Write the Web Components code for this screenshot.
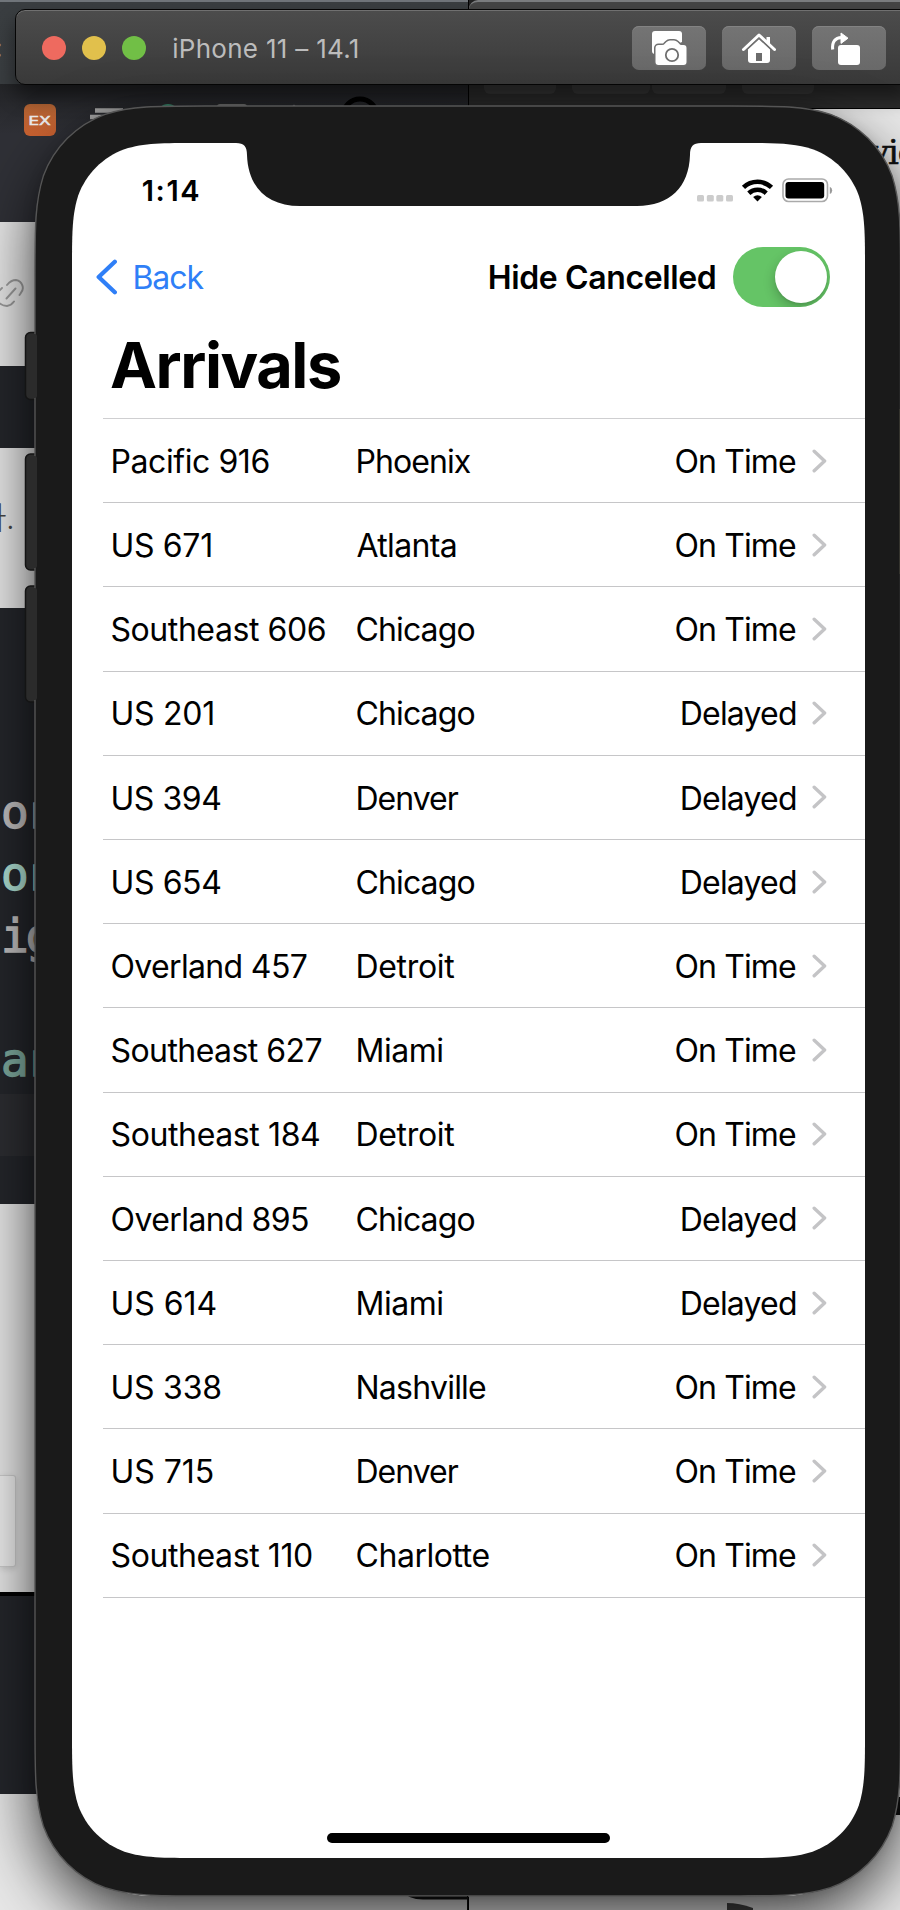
<!DOCTYPE html>
<html lang="en">
<head>
<meta charset="utf-8">
<title>iPhone 11 – 14.1</title>
<style>
html,body{margin:0;padding:0;width:900px;height:1910px;overflow:hidden;background:#222}
body{font-family:Inter,"Liberation Sans",sans-serif}
</style>
</head>
<body>
<sim-desktop>
  <desk-left slot="back"></desk-left>
  <desk-right slot="back"></desk-right>
  <sim-titlebar>iPhone 11 – 14.1</sim-titlebar>
  <sim-phone>
    <ios-status></ios-status>
    <ios-nav></ios-nav>
    <ios-title></ios-title>
    <flight-list></flight-list>
    <home-bar></home-bar>
  </sim-phone>
</sim-desktop>
<script>
const define = (name, html, init) => customElements.define(name, class extends HTMLElement {
  connectedCallback() {
    if (this.shadowRoot) return;
    this.attachShadow({ mode: 'open' }).innerHTML = html;
    if (init) init.call(this, this.shadowRoot);
  }
});

/* Text whose inked width is set by tracking: <fit-text ink="120" size="32" weight="400"> */
const ctx = document.createElement('canvas').getContext('2d');
customElements.define('fit-text', class extends HTMLElement {
  connectedCallback() {
    if (this.shadowRoot) return;
    const text = this.getAttribute('text'), ink = +this.getAttribute('ink');
    const size = +this.getAttribute('size') || 32, weight = this.getAttribute('weight') || 400;
    ctx.font = `${weight} ${size}px Inter, "Liberation Sans", sans-serif`;
    ctx.letterSpacing = '0.01px';
    const m = ctx.measureText(text);
    const natural = m.actualBoundingBoxLeft + m.actualBoundingBoxRight;
    const gap = (ink - natural) / (text.length - 1);
    this.attachShadow({ mode: 'open' }).innerHTML = `<style>
      :host{display:block;width:${ink}px;white-space:nowrap;flex:none}
      span{display:block;width:max-content;font:${weight} ${size}px/${this.getAttribute('line') || size * 1.3 + 'px'} Inter,"Liberation Sans",sans-serif;
        letter-spacing:${gap.toFixed(3)}px;margin-left:${m.actualBoundingBoxLeft.toFixed(2)}px;font-variant-ligatures:none}
    </style><span></span>`;
    this.shadowRoot.querySelector('span').textContent = text;
  }
});

define('sim-desktop', `<style>
  :host{display:grid;grid-template:1910px / 468px 432px;overflow:hidden}
  .front{grid-area:1/1/2/3;display:flex;flex-direction:column;z-index:1}
</style><slot name="back"></slot><div class="front"><slot></slot></div>`);

define('desk-left', `<style>
  :host{display:flex;flex-direction:column;grid-area:1/1;overflow:hidden}
  div{flex:none;overflow:hidden;white-space:nowrap}
  .top{height:82px;background:linear-gradient(#3a3e41,#393d40);border-top:2px solid #70757a;color:#aaa;font:26px/92px Inter,sans-serif}
  .top span{margin-left:-5px}
  .tabs{height:138px;background:linear-gradient(#232427,#2f3036 50px);display:flex}
  .ex{width:32px;height:32px;margin:20px 0 0 24px;border-radius:6px;background:linear-gradient(#b26434,#ca6130);display:grid;place-items:center;color:#ececec;font:13px/1 "DejaVu Sans",sans-serif}
  .ex span{transform:scaleX(1.32);-webkit-text-stroke:.5px #ececec}
  .d{background:#24262b}.l{background:#e6e6e6}
  .code{font:46px/62px "DejaVu Sans Mono",monospace;color:#c1bfbf}
  .code p{margin:0 0 0 1px;height:62px;-webkit-text-stroke:1.300px;letter-spacing:-3px}
  .g{color:#aedfd2}
  .band{height:62px;background:#2c2d31}
  .card{width:15px;height:90px;margin-top:271px;border:1px solid #cbcbcb;border-left:0;border-radius:0 3px 3px 0;background:#ececec;box-shadow:0 2px 6px #0002}
  svg{display:block}
</style>
<div class="top"><span>:</span></div>
<div class="tabs"><div class="ex"><span>EX</span></div>
 <svg width="400" height="40" viewBox="56 84 400 40" fill="none"><path d="M95 110.500h28M90 117h30" stroke="#aaa" stroke-width="4.500"/><circle cx="168" cy="115" r="11" fill="#3a9072"/><rect x="217" y="104" width="30" height="10" rx="3" fill="#777"/><path d="M290 110l4-4 4 4" stroke="#888" stroke-width="2"/><circle cx="360" cy="116" r="17" stroke="#000" stroke-width="5"/></svg></div>
<div class="l" style="height:144px"><svg style="margin-top:56px" width="30" height="30" viewBox="0 278 30 30" fill="none" stroke="#9a9a9a" stroke-width="1.900" stroke-linecap="round"><path d="M6.500 298.500l9-10M7 285q4-5 9-5a8 8 0 0 1 4.500 13.500l-1 1.500M-2 292l4-4M-2 302q4 4 9 4 4-.5 7-4.500"/></svg></div>
<div class="d" style="height:82px"></div>
<div class="l" style="height:160px;color:#444"><span style="display:block;margin:45px 0 0 -22px;font:300 31px/46px 'Noto Sans CJK KR',sans-serif">다.</span></div>
<div class="d code" style="height:486px"><p style="margin-top:173px">or</p><p class="g">or</p><p>ig</p><p></p><p class="g" style="color:#7da99d">ar</p></div>
<div class="band"></div>
<div class="d" style="height:48px"></div>
<div class="l" style="height:388px"><div class="card"></div></div>
<div style="height:4px;background:#000"></div>
<div class="d" style="height:198px"></div>
<div class="l" style="height:116px"></div>`);

define('desk-right', `<style>
  :host{display:flex;flex-direction:column;grid-area:1/2;overflow:hidden;background:linear-gradient(#222 60px,#e6e6e6 60px);border-left:1px solid #000;box-sizing:border-box}
  div{flex:none}
  .top{height:83px;background:#454545;border-top:2px solid #7b7d7f;border-radius:9px 0 0 0}
  .bar{height:23px;border-bottom:1px solid #000;background:#2c2c2c;display:flex}
  .bar i{height:9px;background:#383838;border-radius:0 0 6px 6px}
  .txt{font:500 34px/40px "DejaVu Serif",serif;color:#111;margin:23px 0 0 401px;white-space:nowrap;letter-spacing:-1.200px;-webkit-text-stroke:.6px #111}
  .dark{height:18px;background:#111;margin-top:1625px}
</style><div class="top"></div><div class="bar"><i style="width:72px;margin-left:15px"></i><i style="width:78px;margin-left:16px"></i><i style="width:74px;margin-left:2px"></i><i style="width:72px;margin-left:16px"></i></div>
<div class="txt">vie</div><div class="dark"></div>
<svg width="60" height="12" style="margin:88px 0 0 258px;flex:none"><path d="M0 0q12 0 26 5v7H0z" fill="#444"/></svg>`);

define('sim-titlebar', `<style>
  :host{display:flex;align-items:center;height:74px;margin:9px -12px 0 15px;border:1px solid #050505;border-radius:10px;flex:none;box-sizing:content-box;
    background:linear-gradient(#4c4c4c,#393939);box-shadow:inset 0 1px #707070,0 12px 20px #0007;padding-left:26px;color:#bcbcbc}
  i{width:24px;height:24px;border-radius:50%;margin:2px 16px 0 0;flex:none}
  fit-text{margin:3px 0 0 11.200px}
  nav{display:flex;gap:16px;margin:2px 0 0 274.600px}
  b{width:74px;height:44px;border-radius:7px;background:linear-gradient(#747474,#696969);box-shadow:inset 0 1px #838383}
  svg{display:block}
</style><i style="background:#ee6a5f"></i><i style="background:#e1c04c"></i><i style="background:#71bf46"></i>
<fit-text ink="184.700" size="26" text="iPhone 11 – 14.1"></fit-text>
<nav><b><svg width="74" height="44" viewBox="632 26 74 44"><path d="M655 31h24a3 3 0 0 1 3 3v8l-27 12a3 3 0 0 1-3-3V34a3 3 0 0 1 3-3z" fill="#fff"/><path d="M660 45h3.500q2 0 3-1.500l1.500-1.500q1.500-1.500 3.500-1.500h4q2 0 3.500 1.500l1.500 1.500q1 1.500 2.500 1.500h2a3 3 0 0 1 3 3v14a3 3 0 0 1-3 3h-25a3 3 0 0 1-3-3V48a3 3 0 0 1 3-3z" transform="translate(-1.500 0)" fill="#fff" stroke="#6f6f6f" stroke-width="3" paint-order="stroke"/><circle cx="672" cy="55" r="6.200" fill="none" stroke="#6f6f6f" stroke-width="1.800"/></svg></b>
<b><svg width="74" height="44" viewBox="722 26 74 44"><path d="M759 38.500L748 49v11a3 3 0 0 0 3 3h16a3 3 0 0 0 3-3V49z" fill="#fff"/><path d="M743.500 49.500L759 35l15.500 14.500" fill="none" stroke="#fff" stroke-width="3" stroke-linejoin="round" stroke-linecap="round"/><path d="M766.500 37h3.500v8l-3.500-3z" fill="#fff"/><path d="M747 49.500l12-11 12 11" fill="none" stroke="#6f6f6f" stroke-width="1.200"/><path d="M756 53h6v8h-6z" fill="#6c6c6c"/></svg></b>
<b><svg width="74" height="44" viewBox="812 26 74 44"><rect x="838" y="45" width="22" height="20" rx="3" fill="#fff"/><path d="M832.700 49.500q-1.200-11.500 9-12" fill="none" stroke="#fff" stroke-width="3"/><path d="M841 33l7 5.200-7 5.200z" fill="#fff" stroke="#fff" stroke-linejoin="round"/></svg></b></nav>`);

/* Rounded rectangle with continuous (squircle) corners */
function squircle(x0, y0, x1, y1, r) {
  const k = [1.52866, 1.08849, .86841, .63149, .07491, .37282, .16906].map(v => v * r);
  const corner = (p) => `C${p(k[1],0)} ${p(k[2],0)} ${p(k[3],k[4])}C${p(k[5],k[6])} ${p(k[6],k[5])} ${p(k[4],k[3])}C${p(0,k[2])} ${p(0,k[1])} ${p(0,k[0])}`;
  const rev = (p) => `C${p(0,k[1])} ${p(0,k[2])} ${p(k[4],k[3])}C${p(k[6],k[5])} ${p(k[5],k[6])} ${p(k[3],k[4])}C${p(k[2],0)} ${p(k[1],0)} ${p(k[0],0)}`;
  const tr = (a,b) => `${x1-a},${y0+b}`, br = (a,b) => `${x1-a},${y1-b}`, bl = (a,b) => `${x0+a},${y1-b}`, tl = (a,b) => `${x0+a},${y0+b}`;
  return `M${tl(k[0],0)}L${tr(k[0],0)}${corner(tr)}L${br(0,k[0])}${rev(br)}L${bl(k[0],0)}${corner(bl)}L${tl(0,k[0])}${rev(tl)}Z`;
}
define('sim-phone', `<style>
  :host{display:block;flex:none;position:relative;width:865px;height:1790px;margin:21px 0 0 35px;border-radius:118px;box-shadow:0 24px 58px 4px rgba(0,0,0,.66),0 0 14px rgba(0,0,0,.16)}
  .shell{position:absolute;left:-35px;top:-106px;display:block}
  .screen{position:relative;display:flex;flex-direction:column;box-sizing:border-box;width:793px;height:1715px;margin-left:37px;padding-top:27px;top:37px}
</style>
<svg class="shell" width="900" height="1910" viewBox="0 0 900 1910">
 <g fill="#2b2b2b" stroke="#141414" stroke-width="1.500"><rect x="25.500" y="332.500" width="18" height="67" rx="5"/><rect x="25.500" y="454" width="18" height="116" rx="5"/><rect x="25.500" y="586" width="18" height="116" rx="5"/></g>
 <path d="${squircle(35, 106, 900.5, 1896, 111)}" fill="#1a1a1a" stroke="#555" stroke-width="1.400"/>
 <g fill="#2b2b2b"><rect x="28" y="334" width="9" height="64" rx="2"/><rect x="28" y="456" width="9" height="112" rx="2"/><rect x="28" y="588" width="9" height="112" rx="2"/></g>
 <path d="M899.500 409v165" stroke="#35342e"/>
 <path d="M408 1896.500h59v3h-44q-8 0-15-3zM467 1896h1v14h-1z" fill="#080808"/>
 <path d="${squircle(72, 143, 865, 1858, 83)}" fill="#fff"/>
 <path d="M236 142v1C244 143 247 146.500 247 155C248 187 267 206 300 206H637C670 206 689 187 690 155C690 146.500 693 143 701 143v-1z" fill="#1a1a1a"/>
</svg>
<div class="screen"><slot></slot></div>`);

define('ios-status', `<style>
  :host{display:flex;align-items:center;height:41px;flex:none;color:#000}
  fit-text{margin:0 498.700px 0 70.700px}svg{display:block;flex:none}
</style><fit-text ink="55.600" size="29" weight="600" text="1:14"></fit-text>
<svg width="137" height="41" viewBox="697 170 137 41"><g fill="#ccc"><rect x="697" y="195" width="7" height="6.500" rx="1.500"/><rect x="706.800" y="195" width="7" height="6.500" rx="1.500"/><rect x="716.300" y="195" width="7" height="6.500" rx="1.500"/><rect x="726" y="195" width="7" height="6.500" rx="1.500"/></g>
<g fill="none" stroke="#000" stroke-width="4.600"><path d="M743.500 187.400a20.300 20.300 0 0 1 28 0"/><path d="M748.800 193.200a12.700 12.700 0 0 1 17.400 0"/></g><path d="M757.500 201.500l-4.400-4.500q4.400-3.400 8.800 0z"/>
<rect x="783" y="179" width="44.500" height="22.500" rx="5.500" fill="none" stroke="#aaa" stroke-width="1.600"/><rect x="785.500" y="182" width="38.700" height="16.500" rx="3" fill="#000"/><path d="M829.800 186.700q2.400 1.400 2.400 3.700t-2.400 3.700z" fill="#999"/></svg>`);

define('ios-nav', `<style>
  :host{display:flex;align-items:center;height:132px;flex:none}
  svg{display:block;margin-left:24px;flex:none}
  .back{color:#2f7ff7;margin-left:17.500px}.label{margin-left:285.200px;color:#000}
  fit-text{padding-top:1px}
  .toggle{width:97.500px;height:60px;border-radius:30px;background:#65c466;margin-left:18px;box-sizing:border-box;padding:4px 3px 4px 4px;display:flex;justify-content:flex-end;overflow:hidden}
  .toggle i{width:52px;height:52px;border-radius:50%;background:#fff;box-shadow:-1px 5px 12px #0003,0 2px 2px #0001}
</style><svg width="21" height="36" viewBox="0 0 21 36" fill="none" stroke="#2f7ff7" stroke-width="4.300" stroke-linecap="round" stroke-linejoin="round"><path d="M18.800 2.700L2.700 18l16.100 15.300"/></svg>
<fit-text class="back" ink="70" text="Back"></fit-text><fit-text class="label" ink="225.300" weight="600" text="Hide Cancelled"></fit-text><div class="toggle"><i></i></div>`);

define('ios-title', `<style>:host{display:flex;align-items:center;height:44px;flex:none;padding-left:39px;color:#000}fit-text{padding-top:1px}</style>
<fit-text ink="229" size="63" weight="700" text="Arrivals"></fit-text>`);

define('flight-row', `<style>
  :host{display:grid;grid-template-columns:245px 1fr auto 31px;align-items:center;height:84.210px;box-sizing:border-box;border-bottom:1px solid #c6c6c8;padding:0 38px 0 8.500px;color:#000}
  svg{display:block;justify-self:end}
  fit-text{padding-top:2px}
  .stem{margin-left:1px}
</style>`, function (root) {
  const [flight, fi, city, ci, status] = this.data;
  const t = (text, ink) => { const e = document.createElement('fit-text'); e.setAttribute('text', text); e.setAttribute('ink', ink); if (/^[PUMN]|^De[nt]/.test(text)) e.className = 'stem'; root.append(e); };
  t(flight, fi); t(city, ci); t(status, status === 'Delayed' ? 114.2 : 120.5);
  root.append(Object.assign(document.createElement('template'), { innerHTML: `<svg width="15" height="24" viewBox="0 0 15 24" fill="none" stroke="#c4c4c6" stroke-width="3.400" stroke-linecap="round" stroke-linejoin="round"><path d="M2.200 2.200L12.600 12 2.200 21.800"/></svg>` }).content);
});
define('flight-list', `<style>:host{display:block;flex:none;margin:31px 0 0 31px;border-top:1px solid #cfcfd1}</style>`, function (root) {
  const cities = { Phoenix: 113.3, Atlanta: 99.3, Chicago: 118, Denver: 101.3, Detroit: 96.7, Miami: 84.7, Nashville: 128.7, Charlotte: 133 };
  [['Pacific 916', 156, 'Phoenix', 1], ['US 671', 98.7, 'Atlanta', 1], ['Southeast 606', 213.3, 'Chicago', 1], ['US 201', 100.7, 'Chicago', 0],
   ['US 394', 107.7, 'Denver', 0], ['US 654', 107.7, 'Chicago', 0], ['Overland 457', 195.3, 'Detroit', 1], ['Southeast 627', 210, 'Miami', 1],
   ['Southeast 184', 207.7, 'Detroit', 1], ['Overland 895', 196.7, 'Chicago', 0], ['US 614', 103, 'Miami', 0], ['US 338', 107.7, 'Nashville', 1],
   ['US 715', 100.3, 'Denver', 1], ['Southeast 110', 200.7, 'Charlotte', 1]].forEach(([f, fi, c, onTime]) => {
    const row = document.createElement('flight-row');
    row.data = [f, fi, c, cities[c], onTime ? 'On Time' : 'Delayed'];
    root.append(row);
  });
});
define('home-bar', `<style>:host{display:block;flex:none;width:283px;height:10px;border-radius:5px;background:#000;margin:auto auto 15px 255px}</style>`);
</script>
</body>
</html>
